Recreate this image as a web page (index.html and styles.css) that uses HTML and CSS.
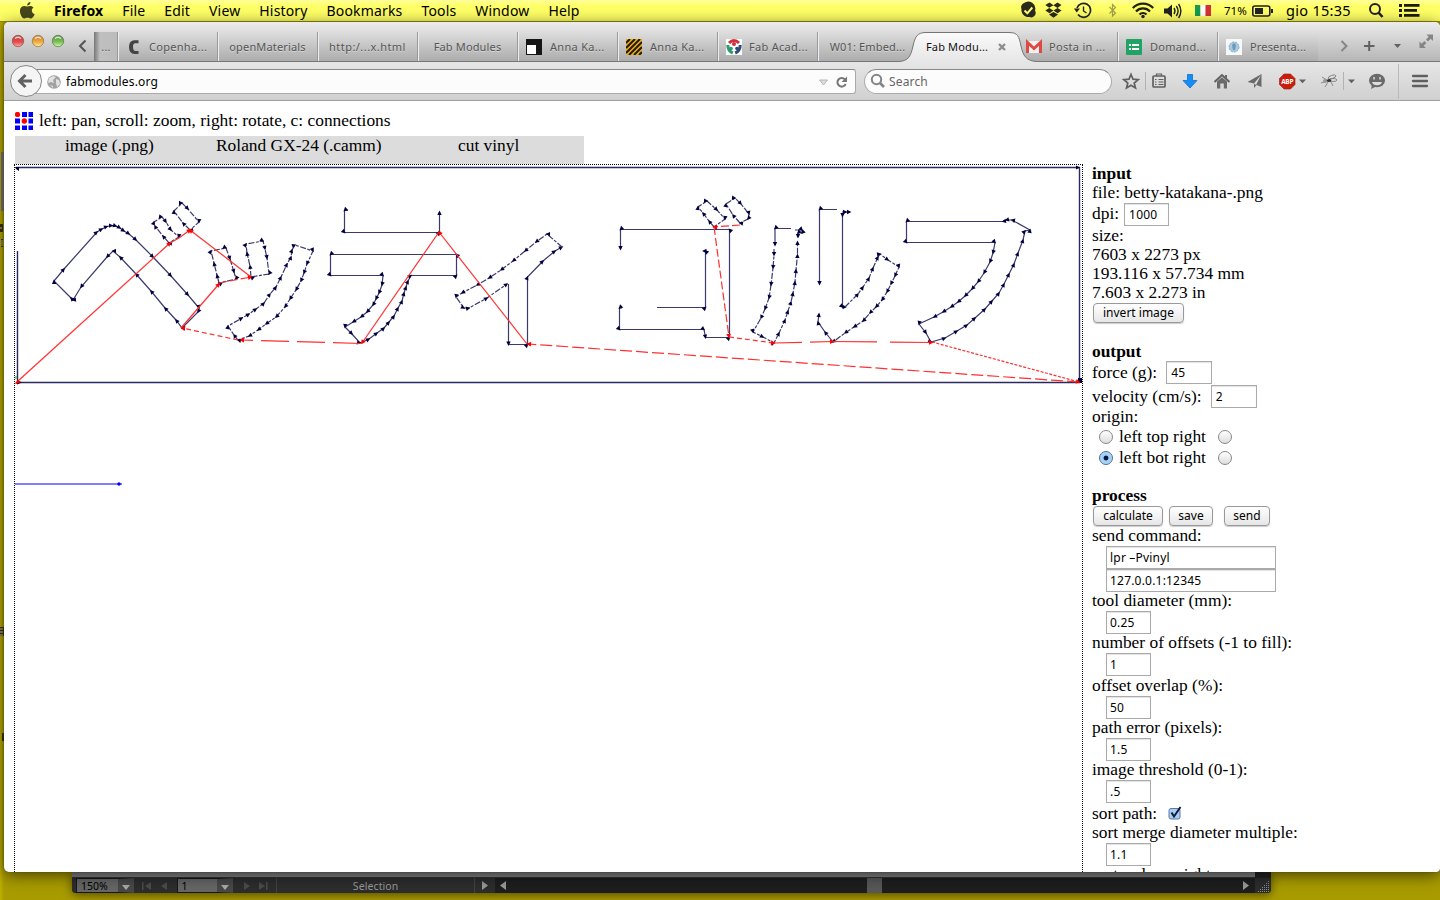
FILE: index.html
```html
<!DOCTYPE html>
<html lang="en">
<head>
<meta charset="utf-8">
<title>Fab Modules</title>
<link rel="stylesheet" href="styles.css">
</head>
<body>
<header class="menubar">
  <svg class="apple" width="50" height="21" viewBox="4 0 50 21"><path d="M30.5 2c.2 1.800-1.500 3.600-3.300 3.500C27 3.700 28.700 2.100 30.500 2zM33.600 7.500c-2.900 1.900-2 5.500 1.100 6.700-1 2.300-2.500 4.300-4 4.300-1.300 0-1.700-.7-3.200-.7s-2 .7-3.200.7c-2.300 0-4.800-5-4.300-8.500.6-4.300 4.200-4.600 7.200-3.400 2.600-1.100 5-.9 6.400.9z" fill="#47471c"/></svg>
  <nav class="menus"><b>Firefox</b><span>File</span><span>Edit</span><span>View</span><span>History</span><span>Bookmarks</span><span>Tools</span><span>Window</span><span>Help</span></nav>
  <div class="status">
    <svg width="25" height="21" viewBox="1015 0 25 21"><path d="M1024 3a7 7 0 0 1 11 7.500 4.500 4.500 0 0 1-5.500 6.500 7 7 0 0 1-8-8A4.500 4.500 0 0 1 1024 3z" fill="#2b2b1c"/><path d="M1024.500 10.500l2.800 2.800 5-5.800" fill="none" stroke="#ffff80" stroke-width="2"/></svg>
    <svg width="30" height="21" viewBox="1040 0 30 21"><path d="M1049.500 2.500l4 2.700-4.300 2.600-3.900-2.900zM1057.500 2.500l4 2.500-4 2.900-4.200-2.700zM1049.200 7.900l4.200 2.600-3.900 2.700-4.200-2.600zM1057.500 7.900l4.100 2.700-4 2.600-4.100-2.700zM1053.500 12l4.500 2.500-4.500 3.200-4.500-3.200z" fill="#2b2b1c"/></svg>
    <svg width="33" height="21" viewBox="1070 0 33 21"><path d="M1077 8a7 7 0 1 1 1 6.500" fill="none" stroke="#222" stroke-width="1.700"/><path d="M1074 8.500h6l-3.300 4z" fill="#222"/><path d="M1083.500 6.500v4.500l3 2" fill="none" stroke="#222" stroke-width="1.400"/></svg>
    <svg width="22" height="21" viewBox="1103 0 22 21"><path d="M1109.500 7l6 6-3 3V4.500l3 3-6 6" fill="none" stroke="#a2a24b" stroke-width="1.200"/></svg>
    <svg width="34" height="21" viewBox="1125 0 34 21"><g fill="none" stroke="#222210" stroke-width="2.200"><path d="M1132.800 8a14 14 0 0 1 20.400 0M1136 11.500a9.500 9.500 0 0 1 14 0M1139.500 14.500a5 5 0 0 1 7 0"/></g><circle cx="1143" cy="16.500" r="1.700" fill="#222"/></svg>
    <svg width="31" height="21" viewBox="1159 0 31 21"><path d="M1164 8.500h3.500L1172 4.500v13l-4.500-4H1164z" fill="#222"/><path d="M1174 8q2 3 0 6M1176.300 6q3.500 5 0 10M1178.600 4q4.500 7 0 14" fill="none" stroke="#222" stroke-width="1.400"/></svg>
    <svg width="29" height="21" viewBox="1190 0 29 21"><path d="M1195 5h5.500v11h-5.500z" fill="#169b50"/><path d="M1200.500 5h5v11h-5z" fill="#fff"/><path d="M1205.500 5h5.500v11h-5.500z" fill="#d3323d"/></svg>
    <span class="battery">71%</span>
    <svg width="33" height="21" viewBox="1249 0 33 21"><rect x="1252.800" y="6" width="17" height="10" rx="2" fill="none" stroke="#222" stroke-width="1.600"/><path d="M1255 8h8v6h-8zM1271 9h2v4h-2z" fill="#222"/></svg>
    <span class="clock">gio 15:35</span>
    <svg width="30" height="21" viewBox="1360 0 30 21"><circle cx="1375" cy="9" r="5" fill="none" stroke="#222" stroke-width="2"/><path d="M1378.500 12.500l4 4.500" stroke="#222" stroke-width="2.600"/></svg>
    <svg width="50" height="21" viewBox="1390 0 50 21"><path d="M1399 4h3v3h-3zM1399 9h3v3h-3zM1399 14h3v3h-3zM1404 4h15.500v2.800H1404zM1404 9h13v2.800h-13zM1404 14h15.500v2.800H1404z" fill="#1c1c08"/></svg>
  </div>
</header>

<main class="desktop">
  <svg class="edge" width="4" height="850" viewBox="0 22 4 850"><path d="M1 152h3v59H1z" fill="#777"/><path d="M0 224h3v8H0zM1 239h2v8H1zM0 627h4v9H0zM2 733h2v8H2z" fill="#3b3500"/><path d="M0 228h2M2 240v6M0 629h3M0 632h3M0 635h3" stroke="#d8d4b0"/></svg>
  <section class="window">
    <div class="tabstrip">
      <svg class="lights" width="90" height="39" viewBox="4 22 90 39">
        <defs>
          <linearGradient id="r" x2="0" y2="1"><stop stop-color="#b8403e"/><stop offset=".6" stop-color="#e84c4e"/><stop offset="1" stop-color="#ffb0a8"/></linearGradient>
          <linearGradient id="y" x2="0" y2="1"><stop stop-color="#c0792a"/><stop offset=".6" stop-color="#f2ab45"/><stop offset="1" stop-color="#fff09c"/></linearGradient>
          <linearGradient id="g" x2="0" y2="1"><stop stop-color="#54893a"/><stop offset=".6" stop-color="#7fc35c"/><stop offset="1" stop-color="#d0ffac"/></linearGradient>
        </defs>
        <circle cx="18" cy="41" r="5.700" fill="url(#r)" stroke="#8e4744" stroke-width=".7"/><circle cx="38" cy="41" r="5.700" fill="url(#y)" stroke="#96703c" stroke-width=".7"/><circle cx="58" cy="41" r="5.700" fill="url(#g)" stroke="#56783f" stroke-width=".7"/>
        <path d="M15 38.500q3-2.500 6 0M35 38.500q3-2.500 6 0M55 38.500q3-2.500 6 0" stroke="#fff" stroke-opacity=".75" stroke-width="1.500" fill="none"/>
        <path d="M85.500 40.500l-5.500 5.500 5.500 5.500" fill="none" stroke="#555" stroke-width="2"/>
      </svg>
      <div class="tab cut"><span>...</span></div>
      <div class="tab fav"><svg width="16" height="16"><path d="M12.500 1.200H8.500Q3 1.200 3 8T8.500 15h4v-3h-3Q7 12 7 8T9.500 4.300h3z" fill="#444"/></svg><span class="near">Copenha...</span></div>
      <div class="tab"><span class="left">openMaterials</span></div>
      <div class="tab"><span class="spaced">http:/...x.html</span></div>
      <div class="tab"><span class="left">Fab Modules</span></div>
      <div class="tab fav"><svg width="16" height="16"><path d="M0 0h16v16H0z" fill="#161616"/><path d="M1 6h9v9H1z" fill="#fff"/></svg><span class="roomy">Anna Ka...</span></div>
      <div class="tab fav"><svg width="16" height="16"><path d="M0 0h16v16H0z" fill="#efad18"/><path d="M0 4l4-4M0 9l9-9M0 14l14-14M3 16L16 3M8 16l8-8M13 16l3-3" stroke="#221b0b" stroke-width="2"/></svg><span class="roomy">Anna Ka...</span></div>
      <div class="tab fav"><svg width="16" height="16"><path d="M0 0h16v16H0z" fill="#fff"/><g fill="none" stroke-width="3"><path d="M3 4q5-5 10 0" stroke="#cf3239"/><path d="M1.800 6q0 6 5 8" stroke="#2b9a68"/><path d="M14.200 6q0 6-5 8" stroke="#2f4c77"/></g><circle cx="8" cy="5" r="2" fill="#cf3239"/><circle cx="5" cy="9.500" r="1.800" fill="#2b9a68"/><circle cx="11" cy="9.500" r="1.800" fill="#2f4c77"/></svg><span class="near">Fab Acad...</span></div>
      <div class="tab"><span class="left">W01: Embed...</span></div>
      <div class="tab active">
        <svg class="shape" width="140" height="31" viewBox="898 31 140 31"><defs><linearGradient id="t" x2="0" y2="1"><stop stop-color="#fafafa"/><stop offset="1" stop-color="#e6e6e6"/></linearGradient></defs><path d="M898 62v-.5C909 61.500 911 55 913 46S917 32.500 926 32.500h83c9 0 10 4 12 13.500s5 15.500 17 15.500v.5z" fill="url(#t)"/><path d="M898 61.500C909 61.500 911 55 913 46S917 32.500 926 32.500h83c9 0 10 4 12 13.500s5 15.500 17 15.500" fill="none" stroke="#757575"/></svg>
        <span>Fab Modu...</span>
        <svg class="close" width="8" height="8"><path d="M1 1l6 6M7 1L1 7" stroke="#8d8d8d" stroke-width="2.300"/></svg>
      </div>
      <div class="tab fav nosep"><svg width="16" height="16"><path d="M0 2h16v12H0z" fill="#f5eeee"/><path d="M1.500 14V3.500L8 9.500l6.500-6V14" fill="none" stroke="#dc4a43" stroke-width="3"/></svg><span class="near">Posta in ...</span></div>
      <div class="tab fav"><svg width="16" height="16"><rect width="16" height="16" rx="1" fill="#20a464"/><path d="M3 5h2v2H3zM6 5h7v2H6zM3 9h2v2H3zM6 9h7v2H6z" fill="#fff"/></svg><span class="roomy">Domand...</span></div>
      <div class="tab fav"><svg width="16" height="16"><path d="M0 0h16v16H0z" fill="#f6f8fa"/><circle cx="8" cy="8" r="5" fill="#a9c9df" stroke="#84aac6" stroke-dasharray="2 1"/><path d="M8 4l2 2-1 5H7L6 6z" fill="#6c9abc"/></svg><span>Presenta...</span></div>
      <svg class="tools" width="122" height="39" viewBox="1318 22 122 39"><path d="M1341.500 41l5 5-5 5" fill="none" stroke="#858585" stroke-width="2"/><path d="M1364 46h10.500M1369.200 41v10" stroke="#626262" stroke-width="2"/><path d="M1394 44h7l-3.500 4z" fill="#626262"/><path d="M1426.500 34.500h6.500v6.500l-2.300-2.200-2.700 2.700-2-2 2.700-2.700zM1419.500 41.500l2.200 2.300 2.700-2.700 2 2-2.700 2.700 2.200 2.200h-6.400z" fill="#858585"/></svg>
    </div>

    <div class="toolbar">
      <svg class="back" width="33" height="38" viewBox="9 62 33 38"><circle cx="26" cy="81" r="15.500" fill="#f5f5f5" stroke="#858585"/><path d="M20 81h12M25.500 75l-6 6 6 6" fill="none" stroke="#626262" stroke-width="3"/></svg>
      <div class="url"><svg width="16" height="16"><circle cx="8" cy="8" r="6.800" fill="#a2a2a2"/><path d="M3 4l4-2 3 1-3 3 1 3-3-1-3 1zM10 5l3 1 1 4-3 3-1-4zM4 11l3 1v2z" fill="#e2e2e2"/></svg><span>fabmodules.org</span><svg class="reload" width="36" height="22" viewBox="819 70 36 22"><path d="M819.500 79h8l-4 5z" fill="#ddd" stroke="#aaa" stroke-width=".8"/><path d="M845 78.500a4.300 4.300 0 1 0 .7 4.500" fill="none" stroke="#777" stroke-width="2"/><path d="M847 75.500v5.500h-5.500z" fill="#777"/></svg></div>
      <div class="search"><svg width="17" height="17"><circle cx="6.500" cy="6.500" r="4.700" fill="none" stroke="#858585" stroke-width="2"/><path d="M10 10l4 4" stroke="#858585" stroke-width="2.600"/></svg><span>Search</span></div>
      <svg width="33" height="38" viewBox="1112 62 33 38"><path d="M1131 74.500l2 4.700 5.200.4-4 3.400 1.300 5-4.500-2.700-4.500 2.700 1.300-5-4-3.400 5.200-.4z" fill="none" stroke="#606060" stroke-width="1.700"/></svg>
      <svg width="32" height="38" viewBox="1145 62 32 38"><path d="M1145.500 72v18" stroke="#b2b2b2"/><rect x="1153" y="76" width="12" height="11" rx="1" fill="none" stroke="#606060" stroke-width="1.700"/><path d="M1156.500 76v-2h5v2M1155 79.500h1.500M1158.500 79.500h5M1155 82h1.500M1158.500 82h5M1155 84.500h1.500M1158.500 84.500h5" stroke="#606060" fill="none" stroke-width="1.200"/></svg>
      <svg width="29" height="38" viewBox="1177 62 29 38"><path d="M1187.500 74.500h5v6h4.500l-7 7.500-7-7.500h4.500z" fill="#168cf6" stroke="#0e70cf" stroke-width=".8"/></svg>
      <svg width="32" height="38" viewBox="1206 62 32 38"><path d="M1214.500 82l7.500-7 7.500 7" fill="none" stroke="#606060" stroke-width="2"/><path d="M1217 81.500l5-4.300 5 4.300v7h-3.200v-5h-3.500v5h-3.300zM1225 75h2v4l-2-2z" fill="#6a6a6a"/></svg>
      <svg width="32" height="38" viewBox="1238 62 32 38"><path d="M1261.500 74v13l-5-2-2.500 3v-4.500l-6.500-1.500z" fill="#6a6a6a"/><path d="M1261 75l-7 8.500 2 1.500z" fill="#ddd"/></svg>
      <svg width="43" height="38" viewBox="1270 62 43 38"><path d="M1284 74h6.500l4.500 4.500v6l-4.500 4.500H1284l-4.500-4.500v-6z" fill="#c91e0b" stroke="#8f1f13" stroke-width=".6"/><text x="1287.200" y="84.200" class="abp">ABP</text><path d="M1299 79.500h7l-3.500 3.800z" fill="#626262"/></svg>
      <svg width="50" height="38" viewBox="1313 62 50 38"><g stroke="#777" stroke-width=".8" fill="none"><path d="M1322 77l5 3M1321 83l6-2M1325 87l3-5M1333 86l-2-4"/><ellipse cx="1332" cy="77" rx="4" ry="1.600" transform="rotate(-20 1332 77)"/><ellipse cx="1333" cy="80" rx="4" ry="1.500"/></g><circle cx="1325" cy="81" r="2" fill="#999"/><ellipse cx="1329" cy="80.500" rx="2.200" ry="1.600" fill="#333"/><path d="M1343.500 72v18" stroke="#b2b2b2"/><path d="M1348 79.500h7l-3.500 3.800z" fill="#626262"/></svg>
      <svg width="35" height="38" viewBox="1363 62 35 38"><ellipse cx="1377" cy="80.500" rx="8" ry="6.700" fill="#6a6a6a"/><path d="M1372 85l-1 4 5-2.500z" fill="#6a6a6a"/><path d="M1374 77v2.500M1380 77v2.500" stroke="#ddd" stroke-width="1.500"/><path d="M1372 82h10q-1 3.200-5 3.200t-5-3.200z" fill="#ddd"/></svg>
      <svg width="42" height="38" viewBox="1398 62 42 38"><path d="M1398.500 64v35" stroke="#b5bbc1"/><path d="M1413 76h14M1413 81h14M1413 86h14" stroke="#606060" stroke-width="2.300" stroke-linecap="round"/></svg>
    </div>

    <article class="page">
      <div class="hint"><svg width="18" height="18"><path d="M7 0h5v5H7zM13.500 0H18v5h-4.500zM0 6.500h5v5H0zM13.500 6.500H18v5h-4.500zM0 13.500h5V18H0zM7 13.500h5V18H7zM13.500 13.500H18V18h-4.500z" fill="#00f"/><circle cx="2.500" cy="2.500" r="2.600" fill="red"/><circle cx="9.300" cy="9" r="2.700" fill="red"/></svg><span>left: pan, scroll: zoom, right: rotate, c: connections</span></div>
      <div class="formats"><span class="f1">image (.png)</span><span class="f2">Roland GX-24 (.camm)</span><span class="f3">cut vinyl</span></div>
      <div class="work">
        <div class="canvas">
          <svg width="1067" height="708" viewBox="15 165 1067 708">
            <defs>
              <marker id="a" markerUnits="userSpaceOnUse" markerWidth="6" markerHeight="6" refX="4" refY="3" orient="auto"><path d="M1 .8l4.400 2.200L1 5.200z" fill="#000040"/></marker>
              <marker id="b" markerUnits="userSpaceOnUse" markerWidth="6" markerHeight="6" refX="4" refY="3" orient="auto"><path d="M1 .6l4.600 2.400L1 5.400z" fill="red"/></marker>
            </defs>
            <g class="frame"><path d="M16 167.500H1079.500V382.500H17.500V251"/></g>
            <path d="M15 167h4v4l-3-2zM1076 165.500l4 2-4 2zM1078 378h4v5h-4zM17 380.500l5 2-5 2z" fill="#000040"/>
            <g class="cutline">
              <path d="M182 328L176 320 165 308 151 291 136 274 120 257 113 251 107 257 81 287 73 300 71 298 54 281 64 269 97 232 102 229 107 226.500 112 225.500 116 226 120 228 124 231 129 234 136 240 153 257 171 276 188 295 199 308 198 312z"/>
              <g class="fine">
                <path d="M169 243L163 236 155 226 154 222 162 217 166 222 171 230 179 237z"/>
                <path d="M190 230L183 223 174 211 182 203 188 209 199 222z"/>
                <path d="M219 283L217 275 214 263 211 251 226 248 230 259 234 272 236 279z"/>
                <path d="M251 277L250 266 247 253 246 244 263 241 265 249 267 258 269 274z"/>
                <path d="M238 340L234 335 228 326 242 318 249 314 256 309 264 303 270 294 276 287 281 277 287 264 291 257 292 250 295 245 313 251 307 264 304 273 301 281 296 290 290 299 285 307 276 317 266 324 258 330 249 336z"/>
              </g>
              <path d="M348 210.500H344.500V232.500H439.500V212"/>
              <path d="M456.500 254.500H330.500V275.500H383L382 285 379 293 376 299 373 305 367 312 361 317 353 322 345 327 352 334 360 343 369 339 377 333 384 328 389 322 394 316 398 308 402 301 404 293 406 287 408 281 411 275.500H456.500z"/>
              <path d="M508.500 344.500H527.500V277L543 261 555 251 562 247"/>
              <path class="fine" d="M562 247L547 234 536 242 525 251 513 261 501 270 489 278 477 285 462 293 456 297 464 308 469 308 487 298 507 284"/>
              <path d="M508.500 284V344.500"/>
              <path d="M705.500 337.500H729.500V229.500H620.500V249"/><path d="M657 307.500H705.500V251h-2"/><path d="M622 308h-2.500V329.500H704l1.500 8"/>
              <path class="fine" d="M714 227L709 221 703 213 698 207 707 201 717 210 725 219z"/>
              <path class="fine" d="M740 223L733 215 726 204 735 198 741 204 749 214 748 219z"/>
              <path d="M791 228.500H775V245"/><path d="M795 230h7v3h-4v4"/>
              <path class="fine" d="M774 249v6L773 268 771 285 769 298 765 309 761 318 753 332 763 337 774 343 779 333 785 320 788 311 791 302 793 293 795 282 796 270 797.500 255V242"/>
              <path d="M837 209.500H819.500V284"/><path d="M842 212h4l4 0M842.500 216V307h3"/>
              <path class="fine" d="M845 307L858 294 863 287 869 278 873 268 878 257 880 254 888 260 899 267 895 276 891 284 887 292 882 300 876 307 870 313 863 321 854 327 845 333 833 342"/>
              <path d="M833 342L825 332 818 322 819 314"/>
              <path d="M1030 230L1012 220 1006 220 1003 221.500H906.500V242.500H995L993 253 990 262 984 273 978 282 972 289 965 296 958 302 951 307 943 312 934 317 919 324 926 333 931 342 945 338 957 331 967 325 975 318 985 309 992 301 999 293 1004 284 1009 274 1014 264 1018 253 1023 240 1025 231z"/>
            </g>
            <g class="jump">
              <path d="M18 381L170 243"/><path d="M170 243L179 238 190 230"/><path d="M251 277L190 230"/><path class="d7" d="M219 283L251 277"/><path d="M181 328L219 284"/><path class="d5" d="M238 340L182 328"/><path class="d28" d="M361 343.500L241 340"/>
              <path d="M439 232L362 343"/><path d="M527 344L439 232"/><path class="d16" d="M1079 382L528 344"/>
              <path class="d7" d="M740 225L714 227"/><path class="d7" d="M714 227L729 337"/><path class="d5" d="M729 337L774 343"/><path class="d28" d="M774 343L833 341.500"/><path class="d45" d="M833 341.500L932 342.500"/><path class="d3" d="M932 342L1079 382"/>
            </g>
            <path d="M16 379v-3" stroke="#0c0"/><path d="M15 383l3-3 3 2-5 2z" fill="red"/>
            <path d="M15 484H122" stroke="#00f" stroke-width="1.200"/><circle cx="119" cy="484" r="1.700" fill="#00f"/>
          </svg>
        </div>
        <aside class="controls">
          <div class="row"><b>input</b></div>
          <div class="row">file: betty-katakana-.png</div>
          <div class="row h24">dpi: <span class="box dpi">1000</span></div>
          <div class="row">size:</div><div class="row">7603 x 2273 px</div><div class="row">193.116 x 57.734 mm</div><div class="row">7.603 x 2.273 in</div>
          <div class="row h40"><span class="btn b91">invert image</span></div>
          <div class="row"><b>output</b></div>
          <div class="row h24">force (g): <span class="box force">45</span></div>
          <div class="row h22">velocity (cm/s): <span class="box force">2</span></div>
          <div class="row h20">origin:</div>
          <div class="row h21"><i class="radio"></i><span class="side">left top right</span><i class="radio"></i></div>
          <div class="row h38"><i class="radio on"></i><span class="side">left bot right</span><i class="radio"></i></div>
          <div class="row"><b>process</b></div>
          <div class="row h21"><span class="btn b70">calculate</span><span class="btn b44">save</span><span class="btn b46">send</span></div>
          <div class="row h20">send command:</div>
          <div class="field"><span class="box wide">lpr –Pvinyl</span></div><div class="field"><span class="box wide">127.0.0.1:12345</span></div>
          <div class="row">tool diameter (mm):</div><div class="field"><span class="box">0.25</span></div>
          <div class="row">number of offsets (-1 to fill):</div><div class="field h24"><span class="box">1</span></div>
          <div class="row">offset overlap (%):</div><div class="field"><span class="box">50</span></div>
          <div class="row">path error (pixels):</div><div class="field"><span class="box">1.5</span></div>
          <div class="row">image threshold (0-1):</div><div class="field"><span class="box">.5</span></div>
          <div class="row sort">sort path: <svg class="check" width="14" height="14"><rect x="1" y="2.500" width="11" height="10.500" rx="2" fill="#a9cdf4" stroke="#5f79a5"/><path d="M3.500 6.500l2.500 4L12.500 1" fill="none" stroke="#101a38" stroke-width="2"/></svg></div>
          <div class="row h20">sort merge diameter multiple:</div><div class="field"><span class="box">1.1</span></div>
          <div class="row">sort order weight:</div>
        </aside>
      </div>
    </article>
  </section>
  <footer class="dock">
    <div class="band"></div>
    <div class="bar">
      <span class="dk">150%</span>
      <svg width="43" height="15" viewBox="134 878 43 15"><g fill="#4c4c4c"><path d="M142 882h1.500v8H142zM151 882v8l-6-4zM167 882v8l-6-4z"/></g></svg>
      <span class="dk">1</span>
      <svg width="43" height="15" viewBox="233 878 43 15"><g fill="#4c4c4c"><path d="M244 882v8l6-4zM259 882v8l6-4zM266 882h1.500v8H266z"/></g></svg>
      <span class="sel">Selection</span>
      <svg width="20" height="15" viewBox="476 878 20 15"><path d="M483 881v9l6-4.500z" fill="#999"/></svg>
      <div class="track"><svg width="760" height="15" viewBox="495 878 760 15"><path d="M506 881v9l-6-4.500zM1243 881v9l6-4.500z" fill="#999"/><path d="M867 878h15v15h-15z" fill="#585858"/></svg></div>
      <svg width="16" height="15"><path d="M3 13.500h11M5 11.500h9M7 9.500h7M9 7.500h5M11 5.500h3M13 3.500h1" stroke="#888" stroke-dasharray="1 1"/></svg>
    </div>
  </footer>
</main>
</body>
</html>
```
FILE: styles.css
```css
* { box-sizing: border-box; }
body { margin: 0; width: 1440px; height: 900px; overflow: hidden; background: #aa9c00; font-family: "Noto Sans", "Open Sans", sans-serif; color: #000; }
svg { display: block; flex: none; }
.menubar { height: 22px; display: flex; background: linear-gradient(#ffff9a, #ffff66 30%, #ffff66); border-bottom: 1px solid #9a8e00; font-size: 14px; line-height: 21px; white-space: nowrap; }
.apple { margin-left: 4px; }
.menus { display: flex; gap: 19px; flex: 1; letter-spacing: .16px; }
.status { display: flex; }
.battery { width: 30px; padding-left: 5px; font-size: 11.500px; }
.clock { width: 78px; padding-left: 4px; font-size: 14.500px; letter-spacing: .3px; }
.desktop { height: 878px; display: grid; grid-template: 850px 28px / 4px 1436px; background: linear-gradient(90deg, #c0b000, #a89b00 4px, #a89b00); }
.window { height: 850px; overflow: hidden; border-radius: 5px 5px 4px 5px; background: #fff; box-shadow: 0 3px 16px rgba(0,0,0,.6), 0 0 1px #333; display: flex; flex-direction: column; z-index: 1; }
.tabstrip { height: 40px; flex: none; display: flex; background: linear-gradient(#ececec, #d0d0d0 50%, #b6b6b6); border-bottom: 1px solid #777; position: relative; }
.tab { position: relative; width: 100px; height: 29px; margin-top: 10px; display: flex; align-items: center; justify-content: center; font-size: 11px; letter-spacing: .15px; color: #555; white-space: nowrap; text-shadow: 0 1px rgba(255,255,255,.4); border-left: 1px solid #eee; box-shadow: -1px 0 #999; background: linear-gradient(rgba(0,0,0,0), rgba(0,0,0,.05)); }
.tab .left { margin-right: 2px; }
.tab .spaced { letter-spacing: .45px; margin-right: 2px; }
.tab .roomy { letter-spacing: .3px; }
.tab .near { margin-left: -1px; letter-spacing: .3px; }
.tab.cut { width: 24px; border: 0; box-shadow: none; background: linear-gradient(90deg, #777, #c0c0c0 6px, #bbb); }
.tab.fav { justify-content: flex-start; padding-left: 7px; gap: 8px; }
.tab.active { z-index: 2; color: #111; border: 0; box-shadow: none; background: none; justify-content: flex-start; padding-left: 8px; }
.tab.active span { z-index: 1; }
.tab.nosep { border-color: transparent; box-shadow: none; }
.shape { position: absolute; left: -20px; top: -1px; }
.close { position: absolute; left: 80px; top: 11px; }
.toolbar { height: 39px; flex: none; display: flex; background: linear-gradient(#e6e6e6, #d0d0d0); border-bottom: 1px solid #a0a0a0; padding-left: 5px; }
.back { z-index: 1; }
.url, .search { height: 25px; margin-top: 7px; border: 1px solid #999; border-color: #888 #aaa #aaa; background: #fcfcfc; display: flex; align-items: center; font-size: 12px; letter-spacing: .15px; }
.url { width: 821px; margin-left: -7px; border-radius: 0 3px 3px 0; padding-left: 10px; gap: 4px; }
.reload { margin-left: auto; }
.search { width: 248px; margin-left: 8px; border-radius: 13px; padding-left: 5px; gap: 2px; color: #666; }
.abp { font: bold 6.500px "Open Sans", sans-serif; fill: #fff; text-anchor: middle; letter-spacing: -.3px; }
.page { flex: 1; padding: 10px 0 0 10px; font-family: "Liberation Serif", "Times New Roman", serif; font-size: 17.400px; line-height: 19px; white-space: nowrap; }
.hint { height: 20px; display: flex; align-items: center; gap: 6px; margin-left: 1px; }
.hint span { padding-bottom: 1px; }
.formats { width: 569px; height: 28px; margin: 5px 0 0 1px; background: #dcdcdc; display: flex; padding-left: 50px; line-height: 18px; }
.f1 { width: 151px; } .f2 { width: 242px; }
.work { display: flex; }
.canvas { width: 1069px; height: 720px; border: 1px dotted #000; flex: none; }
.frame path { fill: none; stroke: #2a2a62; stroke-width: 1.400; }
.cutline path { fill: none; stroke: #3a3a6c; stroke-width: 1.200; marker-mid: url(#a); marker-end: url(#a); }
.cutline .fine, .cutline .fine path { stroke-dasharray: 6 1.500 3 1.500; }
.jump path { fill: none; stroke: #ff3030; stroke-width: 1.200; marker-end: url(#b); }
.jump .d3 { stroke-dasharray: 3 1.500; }
.jump .d5 { stroke-dasharray: 5 3; }
.jump .d7 { stroke-dasharray: 8 3; }
.jump .d16 { stroke-dasharray: 12 4; }
.jump .d28 { stroke-dasharray: 28 8; }
.jump .d45 { stroke-dasharray: 44 13; }
.controls { margin-left: 9px; display: flex; flex-direction: column; }
.row { height: 19px; display: flex; align-items: flex-start; flex: none; }
.row.h20 { height: 20px; } .row.h21 { height: 21px; } .row.h22 { height: 22px; line-height: 22px; }
.row.h24 { height: 24px; line-height: 23px; } .row.h38 { height: 38px; } .row.h40 { height: 40px; }
.field { height: 23px; padding-left: 14px; flex: none; }
.field.h24 { height: 24px; }
.field + .row { height: 19px; line-height: 17px; }
.field + .row.sort { height: 20px; line-height: 21px; }
.box { display: block; width: 45px; height: 23px; border: 1px solid #aaa; box-shadow: inset 0 1px 1px #e3e3e3; padding-left: 3px; font: 12px/21px "Noto Sans", sans-serif; letter-spacing: .2px; background: #fff; }
.box.wide { width: 170px; }
.box.dpi { margin: 1px 0 0 5px; padding-left: 4px; }
.box.force { width: 46px; margin-left: 9px; padding-left: 4px; }
.btn { height: 20px; margin: 1px 0 0 1px; border: 1px solid #999; border-radius: 4px; background: linear-gradient(#fff, #f3f3f3 50%, #e6e6e6); text-align: center; font: 12px/17px "Noto Sans", sans-serif; box-shadow: 0 1px 1px #ccc; }
.b91 { width: 91px; } .b70 { width: 70px; } .b44 { width: 44px; margin-left: 6px; } .b46 { width: 46px; margin-left: 11px; }
.radio { width: 14px; height: 14px; border: 1px solid #888; border-radius: 50%; margin: 3px 0 0 7px; background: linear-gradient(#fff, #ddd); }
.radio.on { background: radial-gradient(circle, #0b1940 2px, #9bcbf6 2.800px, #c4e2fc); border-color: #4f6a98; }
.side { margin: 0 5px 0 6px; }
.check { margin: 3px 0 0 11px; }
.dock { grid-column: 1 / 3; width: 1199px; height: 21px; margin-left: 72px; background: #222; border-radius: 0 0 4px 4px; box-shadow: 0 2px 10px rgba(0,0,0,.5); overflow: hidden; }
.band { height: 6px; width: 1183px; background: #828282; border-bottom: 1px solid #333; }
.bar { height: 15px; display: flex; padding-left: 4px; background: #2d2d2d; font-size: 10.500px; line-height: 17px; }
.dk { width: 58px; padding-left: 4px; border: 1px solid #181818; border-right: 16px solid #484848; background: #666; position: relative; line-height: 15px; }
.dk::after { content: ""; position: absolute; right: -12px; top: 6px; border: 4px solid transparent; border-top: 5px solid #aaa; border-bottom: 0; }
.dk + svg + .dk { width: 57px; }
.sel { width: 201px; text-align: center; color: #999; border: solid #444; border-width: 0 1px; letter-spacing: .1px; }
.track { width: 760px; background: #1e1e1e; }
```
